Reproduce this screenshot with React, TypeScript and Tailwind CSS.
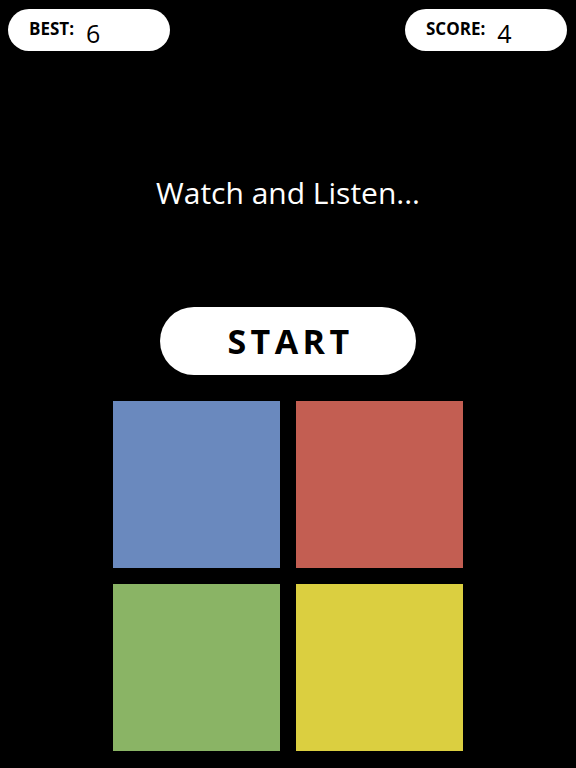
import { useState } from 'react';

const pads = [
  { id: 'blue', color: 'bg-[#6a89be]' },
  { id: 'red', color: 'bg-[#c35e52]' },
  { id: 'green', color: 'bg-[#8ab465]' },
  { id: 'yellow', color: 'bg-[#dbcf40]' },
];

function ScorePill({ label, value }: { label: string; value: number }) {
  return (
    <div className="flex h-[42px] w-[162px] items-start gap-[12px] rounded-full bg-white pl-[21px] text-black">
      <span className="mt-[11px] text-[17px] font-bold leading-none">{label}</span>
      <span className="mt-[12px] text-[25px] leading-none">{value}</span>
    </div>
  );
}

export default function App() {
  const [best] = useState(6);
  const [score] = useState(4);

  return (
    <main
      className="flex min-h-[768px] w-full flex-col items-center bg-black"
      style={{ fontFamily: '"Open Sans", "Noto Sans", sans-serif' }}
    >
      <header className="flex w-full justify-between pl-[8px] pr-[9px] pt-[9px]">
        <ScorePill label="BEST:" value={best} />
        <ScorePill label="SCORE:" value={score} />
      </header>

      <p className="mt-[122px] text-[30px] leading-[40px] text-white">Watch and Listen...</p>

      <button
        type="button"
        className="mt-[94px] flex h-[68px] w-[256px] items-center justify-center rounded-full bg-white pl-[5px] text-[34px] font-bold tracking-[0.13em] text-black"
      >
        START
      </button>

      <div className="mt-[26px] grid grid-cols-[167px_167px] gap-[16px]">
        {pads.map((p) => (
          <div key={p.id} className={`h-[167px] w-[167px] ${p.color}`} />
        ))}
      </div>
    </main>
  );
}
